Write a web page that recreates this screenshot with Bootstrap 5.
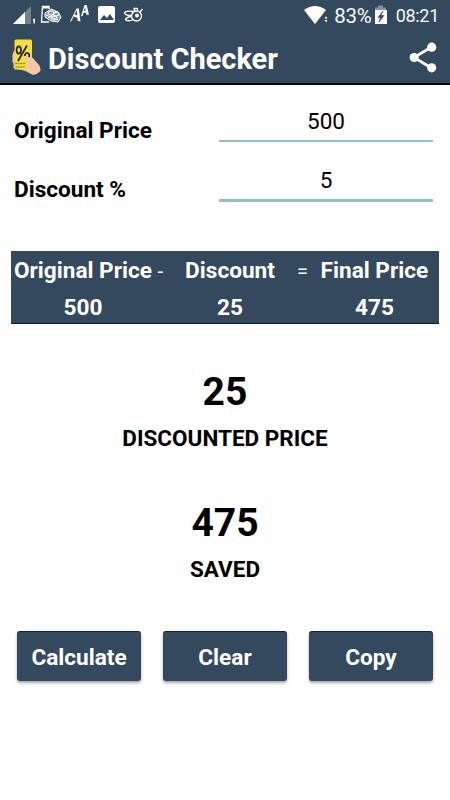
<!DOCTYPE html>
<html lang="en">
<head>
<meta charset="utf-8">
<meta name="viewport" content="width=device-width, initial-scale=1">
<title>Discount Checker</title>
<link href="https://cdn.jsdelivr.net/npm/bootstrap@5.3.0/dist/css/bootstrap.min.css" rel="stylesheet">
<style>
:root{--navy:#34495e;--teal:#8fc3bc}
body{font-family:Roboto,sans-serif;height:800px;overflow:hidden;background:#fefefe;color:#000}
svg{display:block;flex:none}
.bg-navy{background:var(--navy)}
.app-header{height:85px;border-bottom:2px solid #000}
.status{height:32px;padding-left:13px;padding-right:11px;color:#f4f8fa}
.status-text{font-size:20.5px;line-height:32px;letter-spacing:-.2px;margin-right:2px}
.clock{font-size:18px;line-height:32px;letter-spacing:-.3px;margin-left:9px}
.title-bar{height:51px;padding:0 13px 0 11px}
.app-title{font-size:29px;line-height:51px;padding-top:3px;margin-left:7px}
.fields{padding:24px 17px 0 14px}
.field-row{height:59px}
.t22{font-size:22.6px;line-height:26px}
.field-label{width:205px;padding-top:9px}
.field-input{height:33px;border:0;border-bottom:2px solid var(--teal);border-radius:0;padding:0 0 7px;color:#000;background:none!important;font-size:22.5px;line-height:24px;box-shadow:none!important}
.field-input.focused{height:34px;border-bottom-width:3px}
.result-table{margin:24px 11px 0;height:73px;color:#fff;border-bottom:1px solid #071c33;padding-top:7px}
.line{height:36px}
.line-values{padding-top:1px}
.c1{width:155px;padding-left:3px}.c2{width:128px}.c3{width:145px}
.c1-value{padding-right:14px}
.op{font-size:20px}
.equals{margin-right:7px}
.equation-end{padding-left:3px}
.big{font-size:39px;line-height:46px}
.total{height:131px}
.caption-text{font-size:22.5px;margin-top:10px}
.totals{padding-top:45px;height:307px}
.btn-navy{height:50px;flex:1;padding:2px 0 0;background:var(--navy)!important;color:#fff!important;border:0;border-top:1px solid #0f2439;border-radius:3px;font-size:22.6px;line-height:47px;box-shadow:0 2px 3px rgba(0,0,0,.35)}
.actions{gap:22px;padding:0 17px}
</style>
</head>
<body>
<header class="app-header bg-navy text-white">
  <div class="status d-flex">
    <svg width="135" height="32" viewBox="13 0 135 32" fill="none" stroke="#fff">
      <path d="M31 6v18H13z" fill="#71818f" stroke="none"/><path d="M25 12v12H13z" fill="#fff" stroke="none"/>
      <path d="M33 20l1.200-.5v4" stroke-width="1.500"/>
      <path d="M49 9V6.500h-6.500L41.500 22h7.500" stroke-width="1.300"/><path d="M43 6.500h6v2h-6z" fill="#fff" stroke="none"/>
      <g stroke-width="1"><path d="M45 13l6-4 7 3 3 5-3 5-7-1-6-4z" fill="#8d9aa5"/><ellipse cx="51" cy="13" rx="3" ry="2"/><ellipse cx="56" cy="14" rx="3" ry="2"/><ellipse cx="54" cy="18" rx="3" ry="2"/><path d="M46 15l12 5M48 18l8-6"/></g>
      <path d="M69.500 22.500L76.500 8.500h2.300l1.700 13-2.800-.8-.3-3-4-1.200-1.300 3.500zM74.500 14.500l2.700.8-.4-5z" fill="#fff" fill-rule="evenodd" stroke="none"/>
      <path d="M80.800 16.500L84.500 5h2.200l2.300 9.500-2.400.5-.7-2.500-2.500.4-.6 2.800zM83.700 11l1.900-.4-.5-3.100z" fill="#fff" fill-rule="evenodd" stroke="none"/>
      <rect x="98" y="6" width="17" height="17" rx="2" fill="#fff" stroke="none"/><path d="M100 20l4-5 3 3 3-4 4 6z" fill="#34495e" stroke="none"/>
      <g stroke-width="1.300"><ellipse cx="136.500" cy="16" rx="5" ry="5"/><circle cx="137" cy="15.500" r="1.300" fill="#fff"/><path d="M134 11.500q-7-1-9.500 1 0 3 6.500 3M131 16.500q-5 1-5.500 3 2 2.500 8 0M135 11l-1-2.500h3l1 2M140 12l2.500-3"/></g>
    </svg>
    <div class="d-flex ms-auto">
      <svg width="30" height="32" viewBox="305 0 30 32"><path d="M305 10Q316 2 327 10L316 24z" fill="#fff"/><path d="M325.500 18.500l1.500-2.300 1.500 2.300zM325.500 20h3l-1.500 2.500z" fill="#fff"/></svg>
      <span class="status-text">83%</span>
      <svg width="13" height="32" viewBox="373 0 13 32"><path d="M377 5.500h5v2h3v3h-11v-3h3z" fill="#81909c"/><path d="M374 10h12v14h-12z" fill="#fff"/><path d="M382 11l-5 6.500h2.500L378 22l5-6.500h-3z" fill="#34495e" stroke="#34495e" stroke-width=".6"/></svg>
      <span class="clock">08:21</span>
    </div>
  </div>
  <div class="title-bar d-flex align-items-center">
    <svg width="30" height="51" viewBox="11 32 30 51"><path d="M14.500 50q-3 5-2 8-1 3 1 6v4l12 3 7-3-2-12z" fill="#f0be98"/><path d="M14.500 41q0-1.500 1.500-1.500h14.500q1.500 0 1.500 1.500v16l-5 12.500H14.500z" fill="#f7dc42"/><path d="M23.500 55.500q4-3 7.500.5l8 9q2.500 4 1 6.500-4 4-8 3l-8.500-4.500q5-2 4-7l-3-5z" fill="#f6c8a5"/><g fill="none" stroke="#17252b" stroke-width="1.700"><ellipse cx="18.800" cy="50" rx="2.200" ry="3.700"/><path d="M27 45.500L18 61"/><path d="M25 56v-1.500q2-3.500 4.200 0V57"/></g><path d="M15 63.500h11M15.500 67h9" stroke="#a78c34" stroke-width="1.500" stroke-dasharray="2 .6"/></svg>
    <h1 class="app-title fw-bold mb-0">Discount Checker</h1>
    <svg class="ms-auto" width="28" height="51" viewBox="409 32 28 51"><path d="M431.500 47L414 57.500l17.500 10.500" fill="none" stroke="#fff" stroke-width="2.700"/><g fill="#fff"><circle cx="431.700" cy="47.200" r="4.600"/><circle cx="414.200" cy="57.500" r="4.600"/><circle cx="431.700" cy="67.800" r="4.600"/></g></svg>
  </div>
</header>
<main>
  <section class="fields">
    <div class="field-row d-flex"><label for="price" class="field-label t22 fw-bold">Original Price</label><input id="price" class="field-input form-control flex-fill text-center w-auto" size="1" value="500"></div>
    <div class="field-row d-flex"><label for="discount" class="field-label t22 fw-bold">Discount %</label><input id="discount" class="field-input focused form-control flex-fill text-center w-auto" size="1" value="5"></div>
  </section>
  <section class="result-table bg-navy t22 fw-bold">
    <div class="line d-flex text-nowrap"><div class="c1">Original Price <span class="op fw-normal">-</span></div><div class="c2 text-center">Discount</div><div class="c3 equation-end"><span class="op fw-normal equals">=</span> <span>Final Price</span></div></div>
    <div class="line line-values d-flex text-center"><div class="c1 c1-value">500</div><div class="c2">25</div><div class="c3 ps-3">475</div></div>
  </section>
  <section class="totals text-center fw-bold">
    <div class="total"><div class="big">25</div><div class="t22 caption-text">DISCOUNTED PRICE</div></div>
    <div class="total"><div class="big">475</div><div class="t22 caption-text">SAVED</div></div>
  </section>
  <section class="actions d-flex"><button class="btn btn-navy fw-bold">Calculate</button><button class="btn btn-navy fw-bold">Clear</button><button class="btn btn-navy fw-bold">Copy</button></section>
</main>
<script src="https://cdn.jsdelivr.net/npm/bootstrap@5.3.0/dist/js/bootstrap.bundle.min.js"></script>
</body>
</html>
